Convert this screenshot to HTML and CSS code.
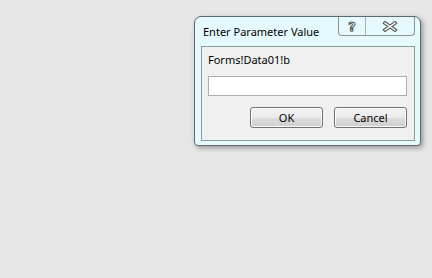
FILE: index.html
```html
<!DOCTYPE html>
<html>
<head>
<meta charset="utf-8">
<link rel="stylesheet" href="styles.css">
</head>
<body>
<div class="dialog">
  <div class="titlebar">
    <span class="title">Enter Parameter Value</span>
    <div class="caption-btns">
      <span class="cbtn help"><span class="qmark">?</span></span>
      <span class="cbtn close">
        <svg width="16" height="11" viewBox="0 0 16 11">
          <path d="M3 2 L13 9 M13 2 L3 9" stroke="#5b5b5b" stroke-width="3.6" stroke-linecap="square" fill="none"/>
          <path d="M3 2 L13 9 M13 2 L3 9" stroke="#ffffff" stroke-width="1.3" stroke-linecap="square" fill="none"/>
        </svg>
      </span>
    </div>
  </div>
  <div class="panel">
    <div class="label">Forms!Data01!b</div>
    <div class="textbox"></div>
    <div class="buttons">
      <span class="btn">OK</span>
      <span class="btn">Cancel</span>
    </div>
  </div>
</div>
</body>
</html>
```
FILE: styles.css
```css
html, body {
  margin: 0;
  padding: 0;
  background: #e6e6e6;
}
body {
  width: 432px;
  height: 278px;
  padding: 16px 0 0 194px;
  box-sizing: border-box;
  font-family: "Noto Sans", "Open Sans", sans-serif;
  color: #000;
}
.dialog {
  width: 227px;
  height: 130px;
  box-sizing: border-box;
  border: 1px solid #5f6a6c;
  border-radius: 7px 7px 4px 4px;
  background: #e5fafc;
  box-shadow: 2px 2px 5px rgba(0,0,0,0.35);
  padding: 0 5px 4px 6px;
  display: flex;
  flex-direction: column;
}
.titlebar {
  height: 29px;
  display: flex;
  justify-content: space-between;
  align-items: flex-start;
}
.title {
  font-size: 11px;
  line-height: 16px;
  margin-top: 7px;
  margin-left: 2px;
  color: #000;
}
.caption-btns {
  display: flex;
  height: 18px;
  border: 1px solid #8c9496;
  border-top: none;
  border-radius: 0 0 4px 4px;
}
.cbtn {
  display: flex;
  align-items: center;
  justify-content: center;
  height: 18px;
}
.help {
  width: 26px;
  border-right: 1px solid #a9b1b3;
}
.close {
  width: 48px;
}
.qmark {
  font-family: "DejaVu Sans", sans-serif;
  font-weight: bold;
  font-size: 13px;
  line-height: 13px;
  color: #ffffff;
  -webkit-text-stroke: 1px #4e4e4e;
  margin-top: 1px;
}
.panel {
  flex: 1;
  background: #f0f0f0;
  border: 1px solid #8f9a9c;
  padding: 5px 6px 0 6px;
  display: flex;
  flex-direction: column;
}
.label {
  font-size: 11px;
  line-height: 16px;
  margin-bottom: 8px;
}
.textbox {
  height: 18px;
  width: 197px;
  background: #fff;
  border: 1px solid #abadb3;
}
.buttons {
  display: flex;
  justify-content: flex-end;
  gap: 11px;
  margin-top: 11px;
  width: 199px;
}
.btn {
  width: 71px;
  height: 19px;
  border: 1px solid #707070;
  border-radius: 3px;
  background: linear-gradient(#f2f2f2 0%, #ebebeb 50%, #dddddd 51%, #cfcfcf 100%);
  box-shadow: inset 0 0 0 1px #fcfcfc;
  font-size: 11px;
  line-height: 19px;
  text-align: center;
}
```
